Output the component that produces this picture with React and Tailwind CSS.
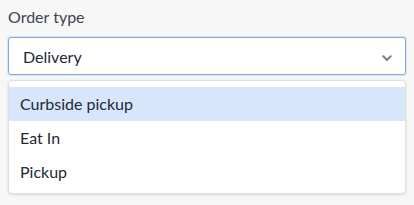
import React, { useState } from 'react';

const options = ['Curbside pickup', 'Eat In', 'Pickup'];

const App = () => {
  const [active, setActive] = useState(0);
  const [value] = useState('Delivery');

  return (
    <div className="min-h-[205px] w-[414px] bg-[#f7f7f7] px-2 pt-[5px] font-['Lato',sans-serif] text-[16px] text-[#222836]">
      <label className="block leading-6 text-[#3d4452]">Order type</label>

      {/* Select */}
      <div className="mt-2 flex h-[38px] w-[398px] items-center justify-between rounded-[3px] border border-[#82abd6] bg-white pl-[14px] pr-[13px] shadow-[0_0_0_1px_rgba(130,171,214,0.25)]">
        <span className="pt-[2px]">{value}</span>
        <svg width="10" height="7" viewBox="0 0 10 7" fill="none" className="mt-[5px]">
          <path d="M1.3 1.3L5 5l3.7-3.7" stroke="#7a7f88" strokeWidth="2" strokeLinecap="round" strokeLinejoin="round" />
        </svg>
      </div>

      {/* Options list */}
      <ul className="mt-[5px] w-[398px] overflow-hidden rounded-[4px] border border-[#e0e0e0] bg-white pt-[6px] pb-[4px] shadow-[0_1px_3px_rgba(0,0,0,0.12)]">
        {options.map((opt, i) => (
          <li
            key={opt}
            onMouseEnter={() => setActive(i)}
            className={`flex h-[34px] items-center pl-[11px] ${i === active ? 'bg-[#d8e6fb]' : 'bg-white'}`}
          >
            {opt}
          </li>
        ))}
      </ul>
    </div>
  );
};

export default App;
